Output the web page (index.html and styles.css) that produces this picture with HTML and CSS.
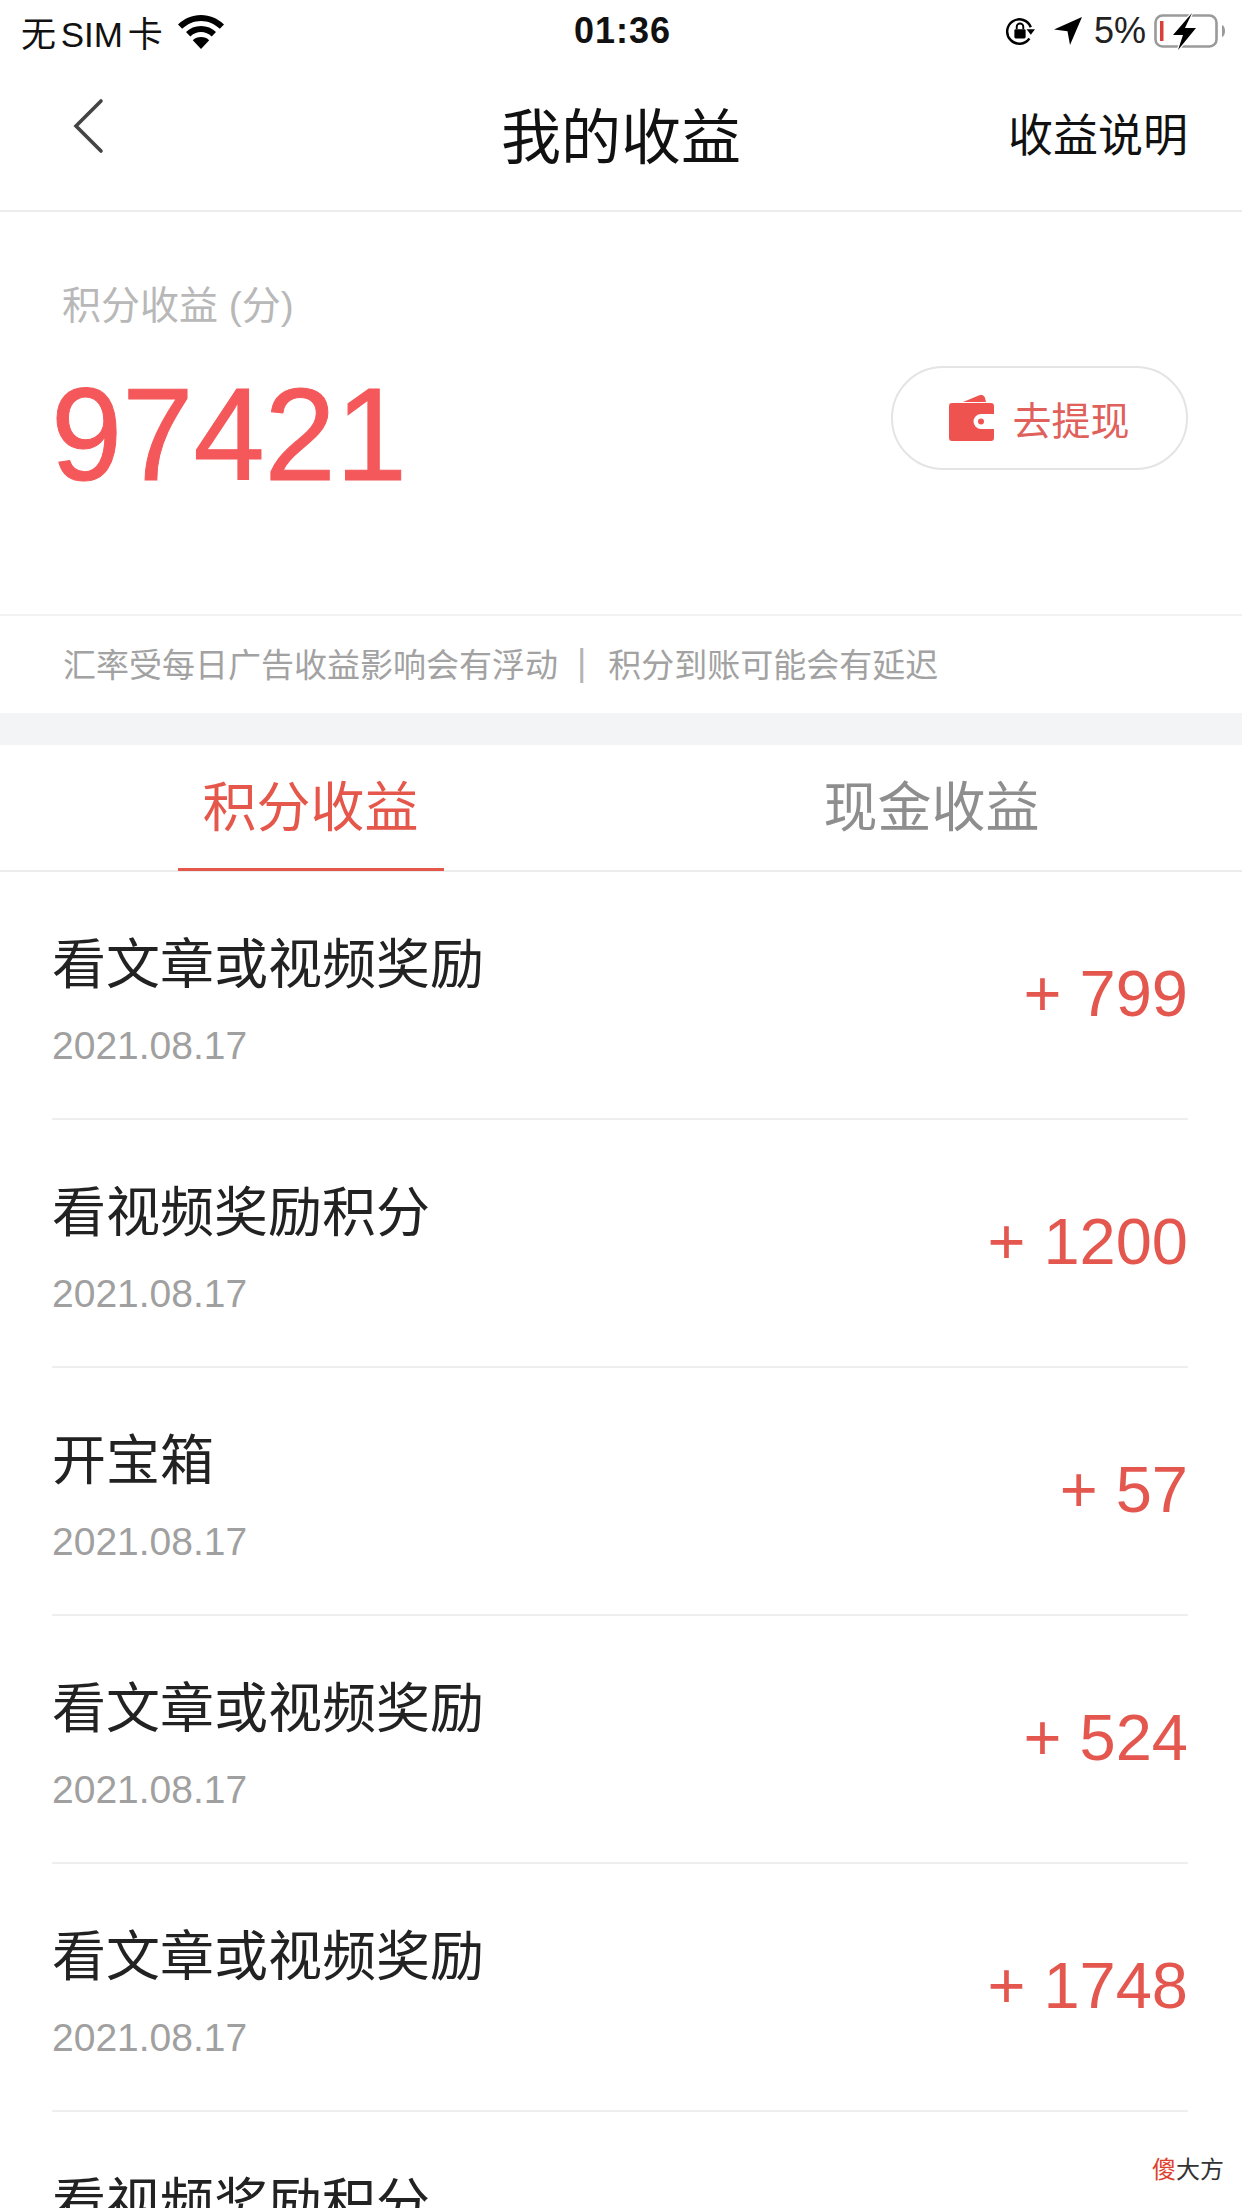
FILE: index.html
```html
<!DOCTYPE html>
<html lang="zh">
<head>
<meta charset="utf-8">
<title>我的收益</title>
<link rel="stylesheet" href="styles.css">
</head>
<body>
<div class="page">
  <header class="status">
    <div class="status-left">
      <span class="carrier">无 SIM 卡</span>
      <svg class="wifi" viewBox="0 0 46 34" width="46" height="34"><path d="M23 0C14 0 6.500 3.500 0 9.500l4.200 4.300C9.800 8.700 16 6 23 6s13.200 2.700 18.800 7.800L46 9.500C39.500 3.500 32 0 23 0z"/><path d="M23 11c-6 0-11 2.300-15 6l4.300 4.400C15.200 18.700 19 17 23 17s7.800 1.700 10.700 4.400L38 17c-4-3.700-9-6-15-6z"/><path d="M23 22c-3.300 0-6 1.200-8.200 3.200L23 34l8.200-8.800C29 23.200 26.300 22 23 22z"/></svg>
    </div>
    <div class="status-time">01:36</div>
    <div class="status-right">
      <svg class="lock" viewBox="0 0 32 32" width="32" height="30"><path d="M27.500 12A13 13 0 1 0 26 24" fill="none" stroke="#000" stroke-width="2.600"/><path d="M23 14h9l-4.500 6z"/><rect x="10" y="14" width="12" height="10" rx="1.500"/><path d="M12.500 14v-2.500a3.500 3.500 0 0 1 7 0V14" fill="none" stroke="#000" stroke-width="2"/></svg>
      <svg class="loc" viewBox="0 0 30 30" width="30" height="30"><path d="M29 1 1 13.500l13.500 1.800L17 29z"/></svg>
      <span class="pct">5%</span>
      <svg class="batt" viewBox="0 0 73 38" width="73" height="38"><rect x="1.500" y="3.500" width="61" height="31" rx="7" fill="none" stroke="#9a9a9a" stroke-width="2.600"/><rect x="6" y="9" width="3.500" height="20" fill="#d9403a"/><path d="M68 13c4 1 4 11 0 12z" fill="#9a9a9a"/><path d="M38 1 19 23h10l-5 15 18-22H31z" stroke="#fff" stroke-width="2.500" paint-order="stroke"/></svg>
    </div>
  </header>

  <nav class="nav">
    <svg class="back" viewBox="0 0 32 56" width="32" height="56"><path d="M29 3 4 28l25 25" fill="none" stroke="#444" stroke-width="3.600" stroke-linecap="round"/></svg>
    <h1 class="nav-title">我的收益</h1>
    <a class="nav-link">收益说明</a>
  </nav>

  <section class="summary">
    <div class="summary-label">积分收益 (分)</div>
    <div class="summary-row">
      <div class="summary-value">97421</div>
      <a class="withdraw">
        <svg class="wallet" viewBox="0 0 45 46" width="45" height="46"><path d="M14 7 31 0c2-.500 4 .500 5 3l1 4z" fill="#ef5350"/><path d="M3 8h39a3 3 0 0 1 3 3v8H32a7.500 7.500 0 0 0 0 15h13v9a3 3 0 0 1-3 3H3a3 3 0 0 1-3-3V11a3 3 0 0 1 3-3z" fill="#ef5350"/><circle cx="32" cy="26.500" r="3" fill="#ef5350"/></svg>
        <span>去提现</span>
      </a>
    </div>
  </section>

  <div class="note">汇率受每日广告收益影响会有浮动<span class="note-sep">|</span>积分到账可能会有延迟</div>

  <div class="tabs">
    <div class="tab tab-active"><span class="tab-label">积分收益</span></div>
    <div class="tab"><span class="tab-label">现金收益</span></div>
  </div>

  <ul class="list">
    <li class="row"><div><div class="row-title">看文章或视频奖励</div><div class="row-date">2021.08.17</div></div><div class="row-amount">+ 799</div></li>
    <li class="row"><div><div class="row-title">看视频奖励积分</div><div class="row-date">2021.08.17</div></div><div class="row-amount">+ 1200</div></li>
    <li class="row"><div><div class="row-title">开宝箱</div><div class="row-date">2021.08.17</div></div><div class="row-amount">+ 57</div></li>
    <li class="row"><div><div class="row-title">看文章或视频奖励</div><div class="row-date">2021.08.17</div></div><div class="row-amount">+ 524</div></li>
    <li class="row"><div><div class="row-title">看文章或视频奖励</div><div class="row-date">2021.08.17</div></div><div class="row-amount">+ 1748</div></li>
    <li class="row row-partial"><div><div class="row-title">看视频奖励积分</div></div></li>
  </ul>

  <div class="watermark"><span class="wm-red">傻</span>大方</div>
</div>
</body>
</html>
```
FILE: styles.css
```css
* { box-sizing: border-box; margin: 0; padding: 0; }
html, body { background: #fff; }
body { font-family: "Liberation Sans", "Noto Sans CJK SC", sans-serif; color: #111; }
.page { position: relative; width: 1242px; height: 2208px; overflow: hidden; background: #fff; }

.status { height: 62px; display: grid; grid-template-columns: 1fr auto 1fr; align-items: center; padding: 0 15px 0 21px; }
.status-left { display: flex; align-items: center; gap: 15px; }
.carrier { font-size: 35px; color: #111; word-spacing: -5px; }
.status-time { font-size: 36px; font-weight: 700; letter-spacing: 1px; margin-left: -3px; }
.status-right { display: flex; align-items: center; justify-content: flex-end; }
.lock { margin-right: 17px; }
.loc { margin-right: 11px; }
.pct { font-size: 36px; color: #222; margin-right: 8px; }
.wifi { margin-top: 2px; }

.nav { height: 150px; display: flex; align-items: center; justify-content: space-between; padding: 0 54px 0 72px; border-bottom: 2px solid #ececec; position: relative; }
.back { margin-top: -20px; }
.nav-title { position: absolute; left: 0; right: 0; top: 42px; text-align: center; font-size: 60px; font-weight: 400; line-height: 70px; color: #111; }
.nav-link { font-size: 45px; line-height: 60px; color: #111; margin-bottom: -2px; }

.summary { height: 402px; padding: 69px 54px 0 51px; }
.summary-label { font-size: 39px; line-height: 50px; color: #b8b8b8; padding-left: 11px; }
.summary-row { display: flex; justify-content: space-between; align-items: flex-start; }
.summary-value { font-size: 128px; line-height: 150px; margin-top: 29px; color: #f4585a; transform: scaleY(1.03); -webkit-text-stroke: 1px #f4585a; }
.withdraw { width: 297px; height: 104px; border: 2px solid #e4e4e4; border-radius: 52px; display: flex; align-items: center; justify-content: center; gap: 18px; font-size: 39px; color: #e0605c; margin-top: 35px; }

.note { height: 99px; border-top: 2px solid #f2f2f2; padding-left: 63px; padding-bottom: 4px; display: flex; align-items: center; font-size: 33px; color: #a2a2a2; }
.note-sep { margin: 0 22px 0 19px; font-size: 36px; color: #b4b4b4; }

.tabs { border-top: 32px solid #f3f4f5; height: 159px; border-bottom: 2px solid #ececec; display: flex; }
.tab { flex: 1; display: flex; justify-content: center; }
.tab-label { font-size: 54px; line-height: 126px; height: 126px; color: #8e8e8e; padding: 0 25px; }
.tab-active .tab-label { color: #e4574a; border-bottom: 3px solid #e4574a; }

.list { list-style: none; padding: 0 54px 0 52px; }
.row { height: 248px; border-bottom: 2px solid #eeeeee; display: flex; justify-content: space-between; align-items: center; padding-bottom: 2px; }
.row-title { font-size: 54px; line-height: 76px; color: #222; margin-top: 10px; }
.row-date { font-size: 39px; line-height: 50px; color: #a0a0a0; margin-top: 18px; }
.row-amount { font-size: 65px; line-height: 80px; color: #e4574f; }
.row-partial { align-items: flex-start; padding-top: 54px; border-bottom: 0; }
.row-partial .row-title { margin-top: 0; }

.watermark { position: absolute; right: 18px; bottom: 22px; font-size: 24px; line-height: 32px; color: #333; }
.wm-red { color: #e0402e; }
```
